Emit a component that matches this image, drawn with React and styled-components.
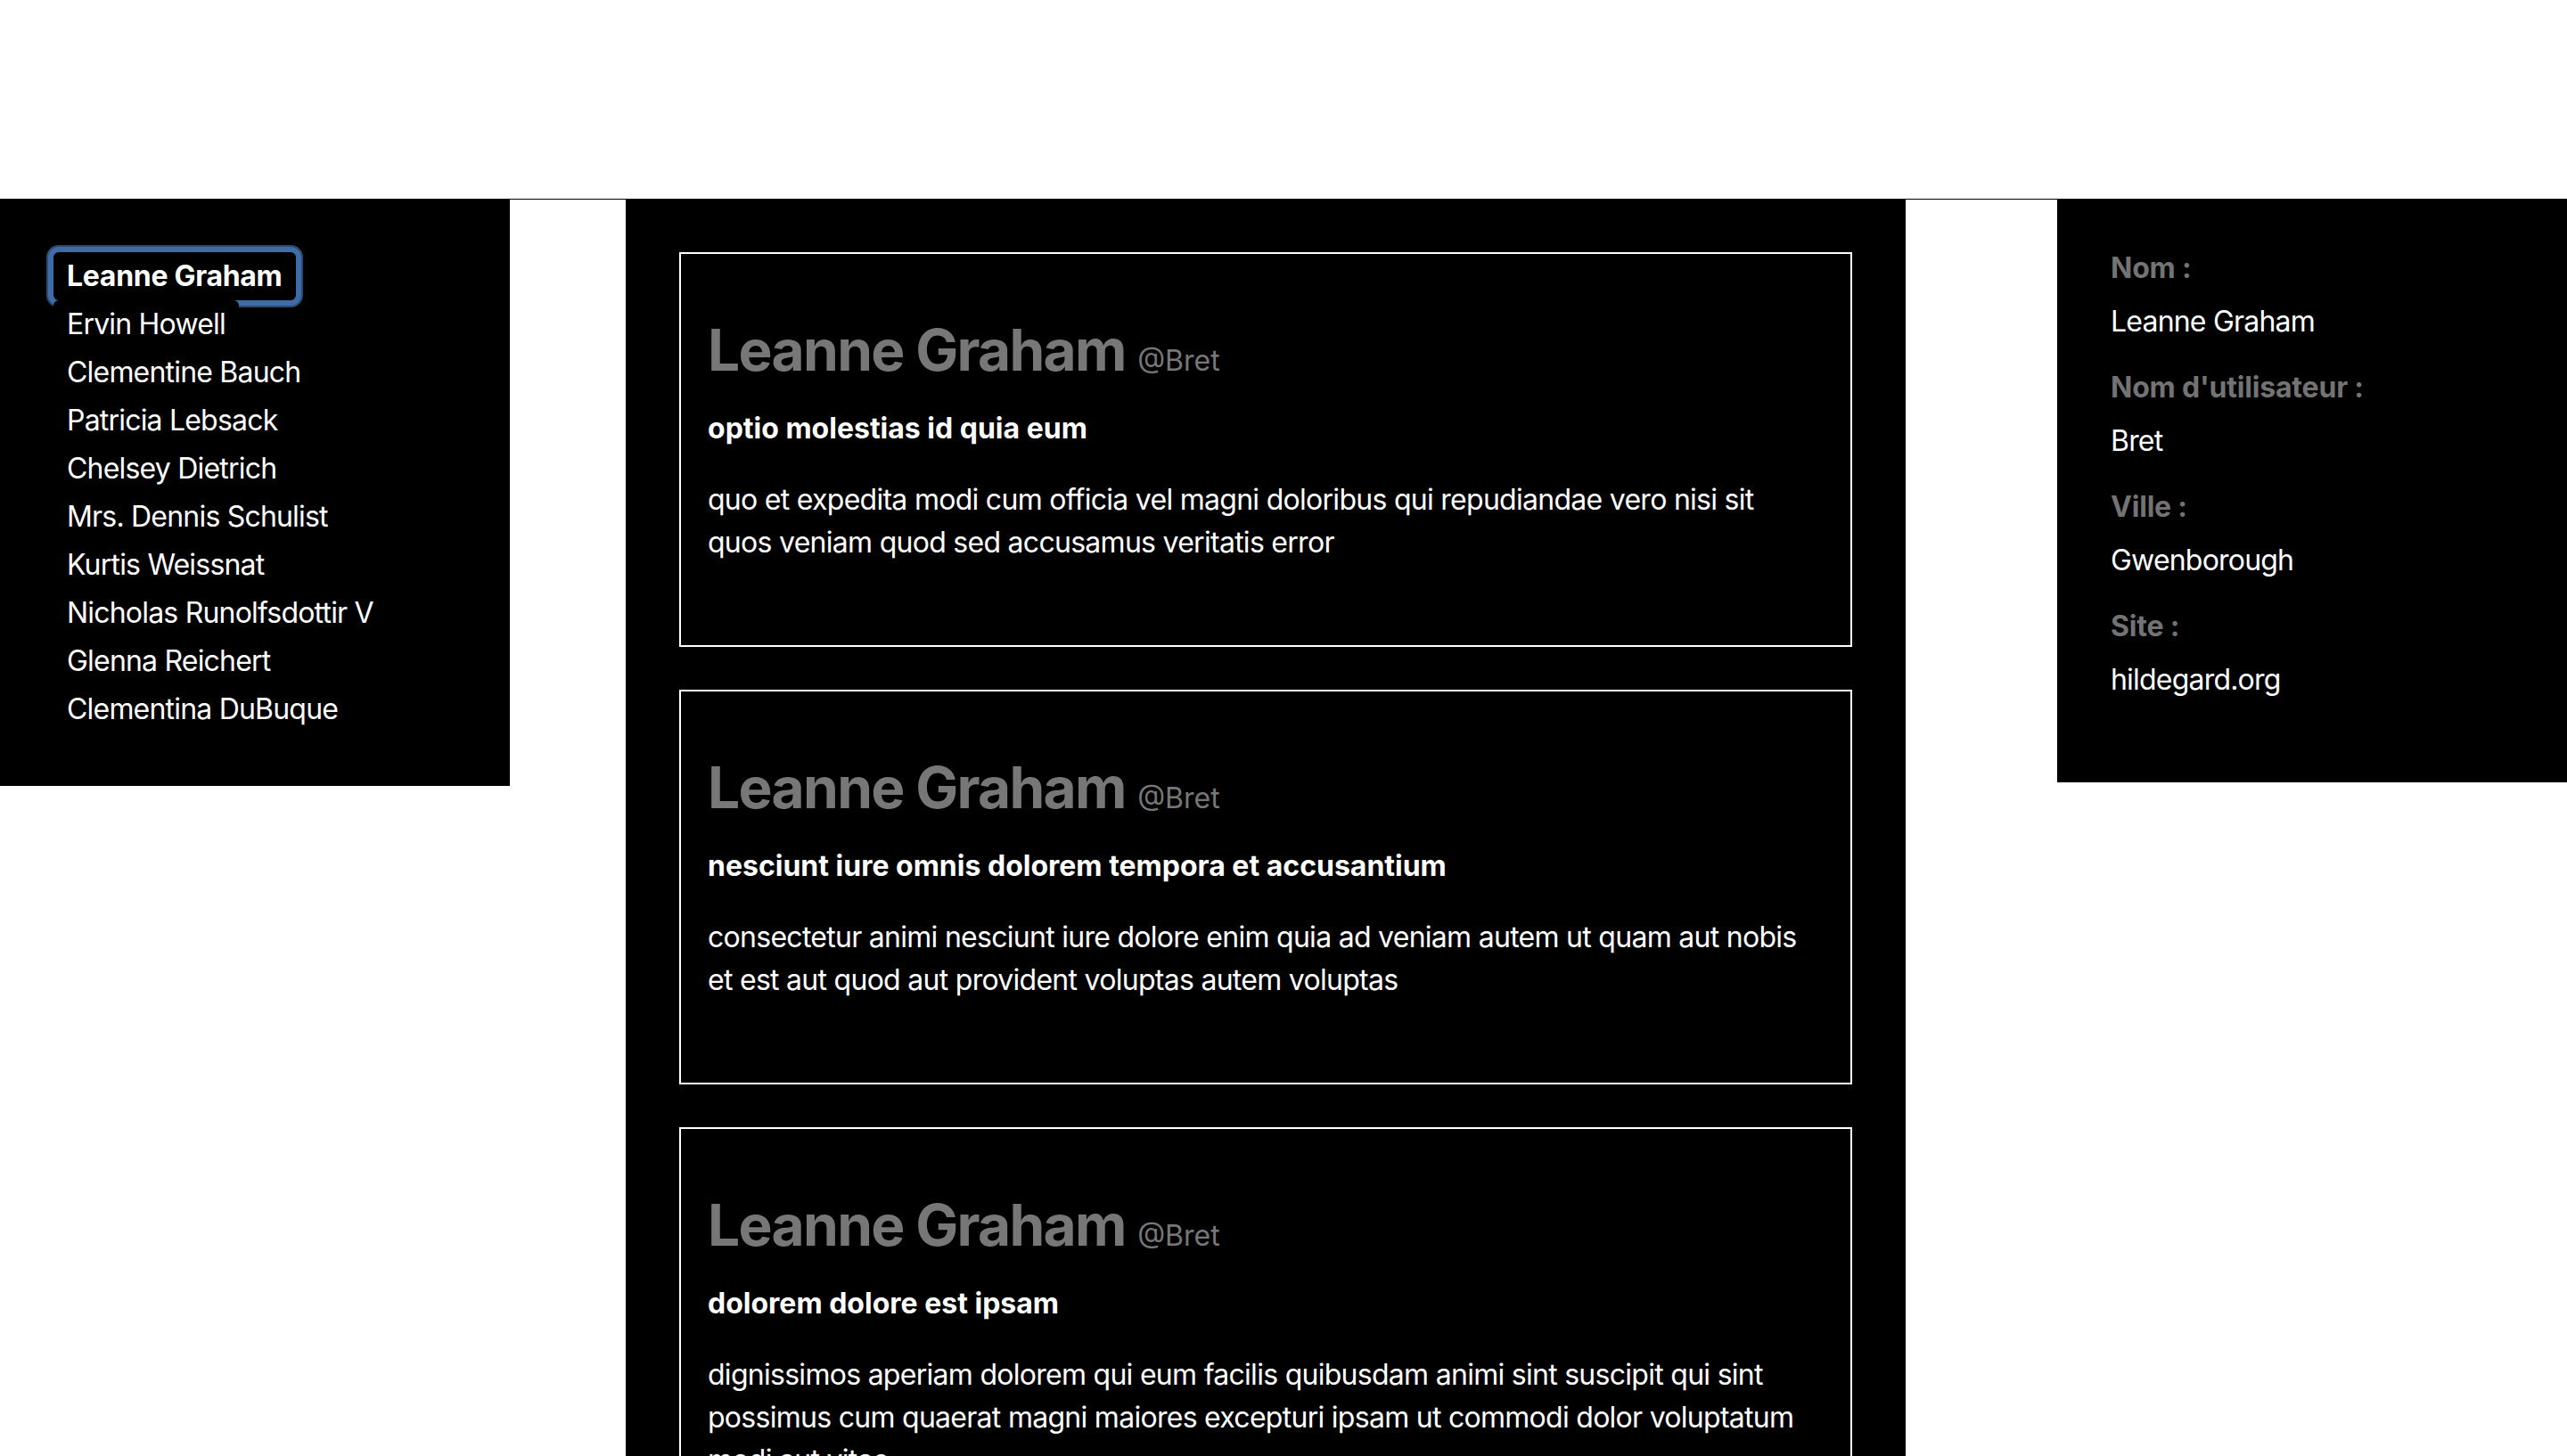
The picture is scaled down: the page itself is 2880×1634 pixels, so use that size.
import React, { useState } from "react";
import styled, { createGlobalStyle } from "styled-components";

const GlobalStyle = createGlobalStyle`
  html, body {
    margin: 0;
    padding: 0;
    background: #ffffff;
    font-family: "Inter", "Noto Sans", "Liberation Sans", sans-serif;
  }
  * { box-sizing: border-box; }
`;

const users = [
  "Leanne Graham",
  "Ervin Howell",
  "Clementine Bauch",
  "Patricia Lebsack",
  "Chelsey Dietrich",
  "Mrs. Dennis Schulist",
  "Kurtis Weissnat",
  "Nicholas Runolfsdottir V",
  "Glenna Reichert",
  "Clementina DuBuque",
];

const posts = [
  { title: "optio molestias id quia eum", body: "quo et expedita modi cum officia vel magni doloribus qui repudiandae vero nisi sit quos veniam quod sed accusamus veritatis error" },
  { title: "nesciunt iure omnis dolorem tempora et accusantium", body: "consectetur animi nesciunt iure dolore enim quia ad veniam autem ut quam aut nobis et est aut quod aut provident voluptas autem voluptas" },
  { title: "dolorem dolore est ipsam", body: "dignissimos aperiam dolorem qui eum facilis quibusdam animi sint suscipit qui sint possimus cum quaerat magni maiores excepturi ipsam ut commodi dolor voluptatum modi aut vitae" },
  { title: "magnam facilis autem", body: "dolore placeat quibusdam ea quo vitae magni quis enim qui quis quo nemo aut saepe quidem repellat excepturi ut quia sunt ut sequi eos ea sed quas" },
  { title: "dolorem eum magni eos aperiam quia", body: "ut aspernatur corporis harum nihil quis provident sequi mollitia nobis aliquid molestiae perspiciatis et ea nemo ab reprehenderit accusantium quas voluptate dolores velit et doloremque molestiae" },
  { title: "nesciunt quas odio", body: "repudiandae veniam quaerat sunt sed alias aut fugiat sit autem sed est voluptatem omnis possimus esse voluptatibus quis est aut tenetur dolor neque" },
];

const details = [
  { label: "Nom :", value: "Leanne Graham" },
  { label: "Nom d'utilisateur :", value: "Bret" },
  { label: "Ville :", value: "Gwenborough" },
  { label: "Site :", value: "hildegard.org" },
];

const Header = styled.header`
  height: 224px;
  border-bottom: 1px solid #000;
  background: #fff;
`;

const Layout = styled.div`
  display: flex;
  align-items: flex-start;
`;

const Sidebar = styled.nav`
  width: 572px;
  flex: none;
  background: #000;
`;

const UserList = styled.ul`
  list-style: none;
  margin: 0;
  padding: 59px 0 59px 60px;
  display: flex;
  flex-direction: column;
  align-items: flex-start;
`;

const UserButton = styled.button`
  display: block;
  height: 54px;
  padding: 0 15px;
  margin: 0;
  border: none;
  background: #000;
  color: #fff;
  font-family: inherit;
  font-size: 32px;
  line-height: 54px;
  font-weight: ${(p) => (p.$active ? 700 : 400)};
  letter-spacing: ${(p) => (p.$active ? "-0.3px" : "-0.8px")};
  border-radius: 6px;
  cursor: pointer;
  text-align: left;
  box-shadow: ${(p) =>
    p.$active ? "0 0 0 6px #3e6ca6, 0 0 0 8px #2b4a72" : "none"};
  outline: none;
`;

const Feed = styled.main`
  width: 1436px;
  flex: none;
  margin-left: 130px;
  min-height: 1410px;
  background: #000;
  padding: 59px 60px 60px;
  display: flex;
  flex-direction: column;
  gap: 48px;
`;

const PostCard = styled.article`
  border: 2px solid #fff;
  padding: 70px 30px 91px;
  color: #fff;
`;

const AuthorLine = styled.h1`
  margin: 0;
  font-size: 64px;
  line-height: 76px;
  font-weight: 700;
  letter-spacing: -1.7px;
  color: #777777;
`;

const Handle = styled.small`
  font-size: 32px;
  font-weight: 400;
  letter-spacing: 0;
  color: #777777;
`;

const PostTitle = styled.h2`
  margin: 14px 0 0;
  font-size: 32px;
  line-height: 48px;
  font-weight: 700;
  color: #fff;
`;

const PostBody = styled.p`
  margin: 32px 0 0;
  font-size: 32px;
  line-height: 48px;
  font-weight: 400;
  letter-spacing: -0.72px;
  color: #fff;
`;

const Details = styled.aside`
  width: 572px;
  flex: none;
  margin-left: auto;
  background: #000;
  padding: 53px 60px 91px;
  display: flex;
  flex-direction: column;
  gap: 26px;
`;

const DetailGroup = styled.dl`
  margin: 0;
  display: flex;
  flex-direction: column;
  gap: 12px;
`;

const DetailLabel = styled.dt`
  font-size: 32px;
  line-height: 48px;
  font-weight: 700;
  letter-spacing: -0.2px;
  color: #737373;
`;

const DetailValue = styled.dd`
  margin: 0;
  font-size: 32px;
  line-height: 48px;
  letter-spacing: -0.8px;
  color: #fff;
`;

export default function App() {
  const [selected, setSelected] = useState(0);
  return (
    <>
      <GlobalStyle />
      <Header />
      <Layout>
        <Sidebar>
          <UserList>
            {users.map((u, i) => (
              <li key={u}>
                <UserButton $active={i === selected} onClick={() => setSelected(i)}>
                  {u}
                </UserButton>
              </li>
            ))}
          </UserList>
        </Sidebar>
        <Feed>
          {posts.map((p) => (
            <PostCard key={p.title}>
              <AuthorLine>
                Leanne Graham <Handle>@Bret</Handle>
              </AuthorLine>
              <PostTitle>{p.title}</PostTitle>
              <PostBody>{p.body}</PostBody>
            </PostCard>
          ))}
        </Feed>
        <Details>
          {details.map((d) => (
            <DetailGroup key={d.label}>
              <DetailLabel>{d.label}</DetailLabel>
              <DetailValue>{d.value}</DetailValue>
            </DetailGroup>
          ))}
        </Details>
      </Layout>
    </>
  );
}
